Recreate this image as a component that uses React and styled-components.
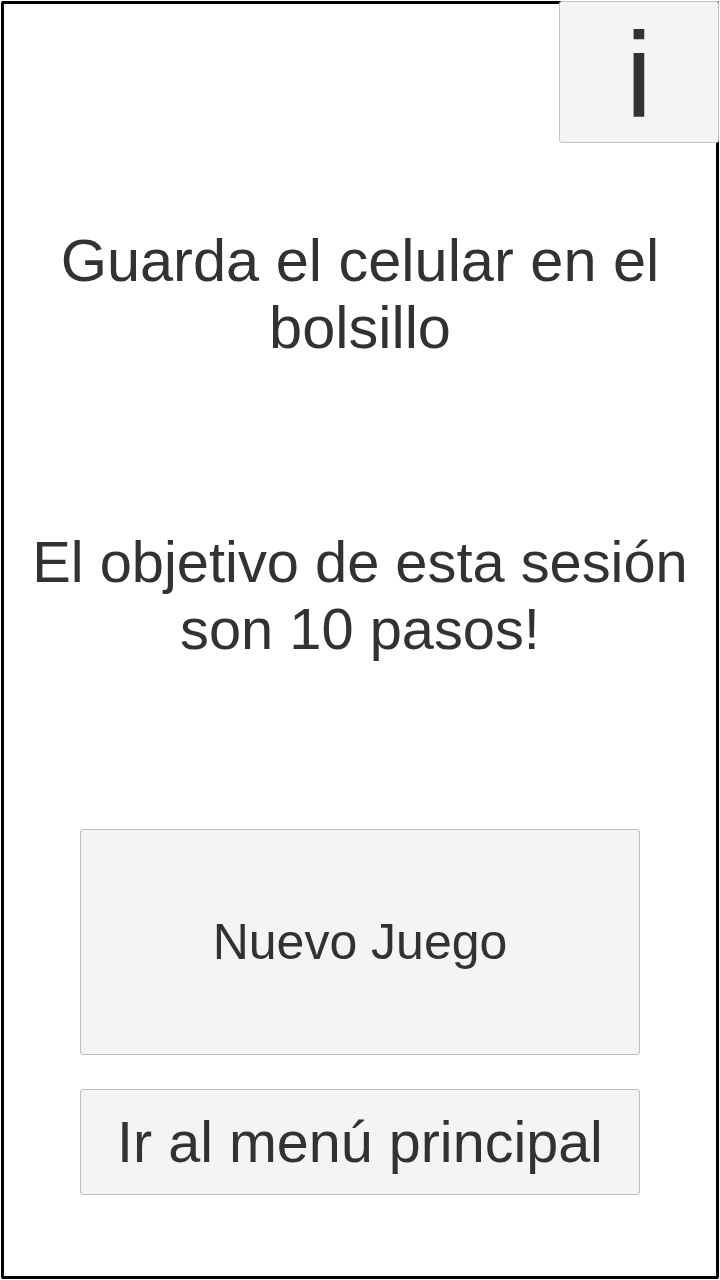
import React from 'react';
import styled, { createGlobalStyle } from 'styled-components';

const GlobalStyle = createGlobalStyle`
  html, body {
    margin: 0;
    padding: 0;
    background: #fff;
  }
  body {
    font-family: "Liberation Sans", Arial, sans-serif;
    color: #323232;
  }
`;

const Frame = styled.div`
  position: relative;
  box-sizing: border-box;
  width: 718px;
  height: 1278px;
  margin: 1px;
  border: 3px solid #000;
  border-radius: 2px;
  display: flex;
  flex-direction: column;
  align-items: center;
`;

const InfoButton = styled.button`
  position: absolute;
  top: -3px;
  right: -3px;
  box-sizing: border-box;
  width: 160px;
  height: 142px;
  display: flex;
  align-items: center;
  justify-content: center;
  padding: 4px 0 0;
  background: #f4f4f4;
  border: 1px solid #c4c4c4;
  border-radius: 3px;
  font-family: "Liberation Sans", Arial, sans-serif;
  font-size: 121px;
  line-height: 1;
  color: #323232;
`;

const Message = styled.p`
  margin: ${(p) => p.$top}px 0 0;
  width: 100%;
  text-align: center;
  font-size: ${(p) => p.$size}px;
  line-height: 67px;
`;

const ActionButton = styled.button`
  box-sizing: border-box;
  margin-top: ${(p) => p.$top}px;
  width: 560px;
  height: ${(p) => p.$height}px;
  display: flex;
  align-items: center;
  justify-content: center;
  padding: 0;
  background: #f4f4f4;
  border: 1px solid #bdbdbd;
  border-radius: 3px;
  font-family: "Liberation Sans", Arial, sans-serif;
  font-size: ${(p) => p.$size}px;
  color: #323232;
`;

export default function App() {
  return (
    <>
      <GlobalStyle />
      <Frame>
        <InfoButton>i</InfoButton>
        <Message $top={223} $size={59.5}>
          Guarda el celular en el
          <br />
          bolsillo
        </Message>
        <Message $top={168} $size={57.8}>
          El objetivo de esta sesión
          <br />
          son 10 pasos!
        </Message>
        <ActionButton $top={166} $height={226} $size={50}>
          Nuevo Juego
        </ActionButton>
        <ActionButton $top={34} $height={106} $size={57.5}>
          Ir al menú principal
        </ActionButton>
      </Frame>
    </>
  );
}
